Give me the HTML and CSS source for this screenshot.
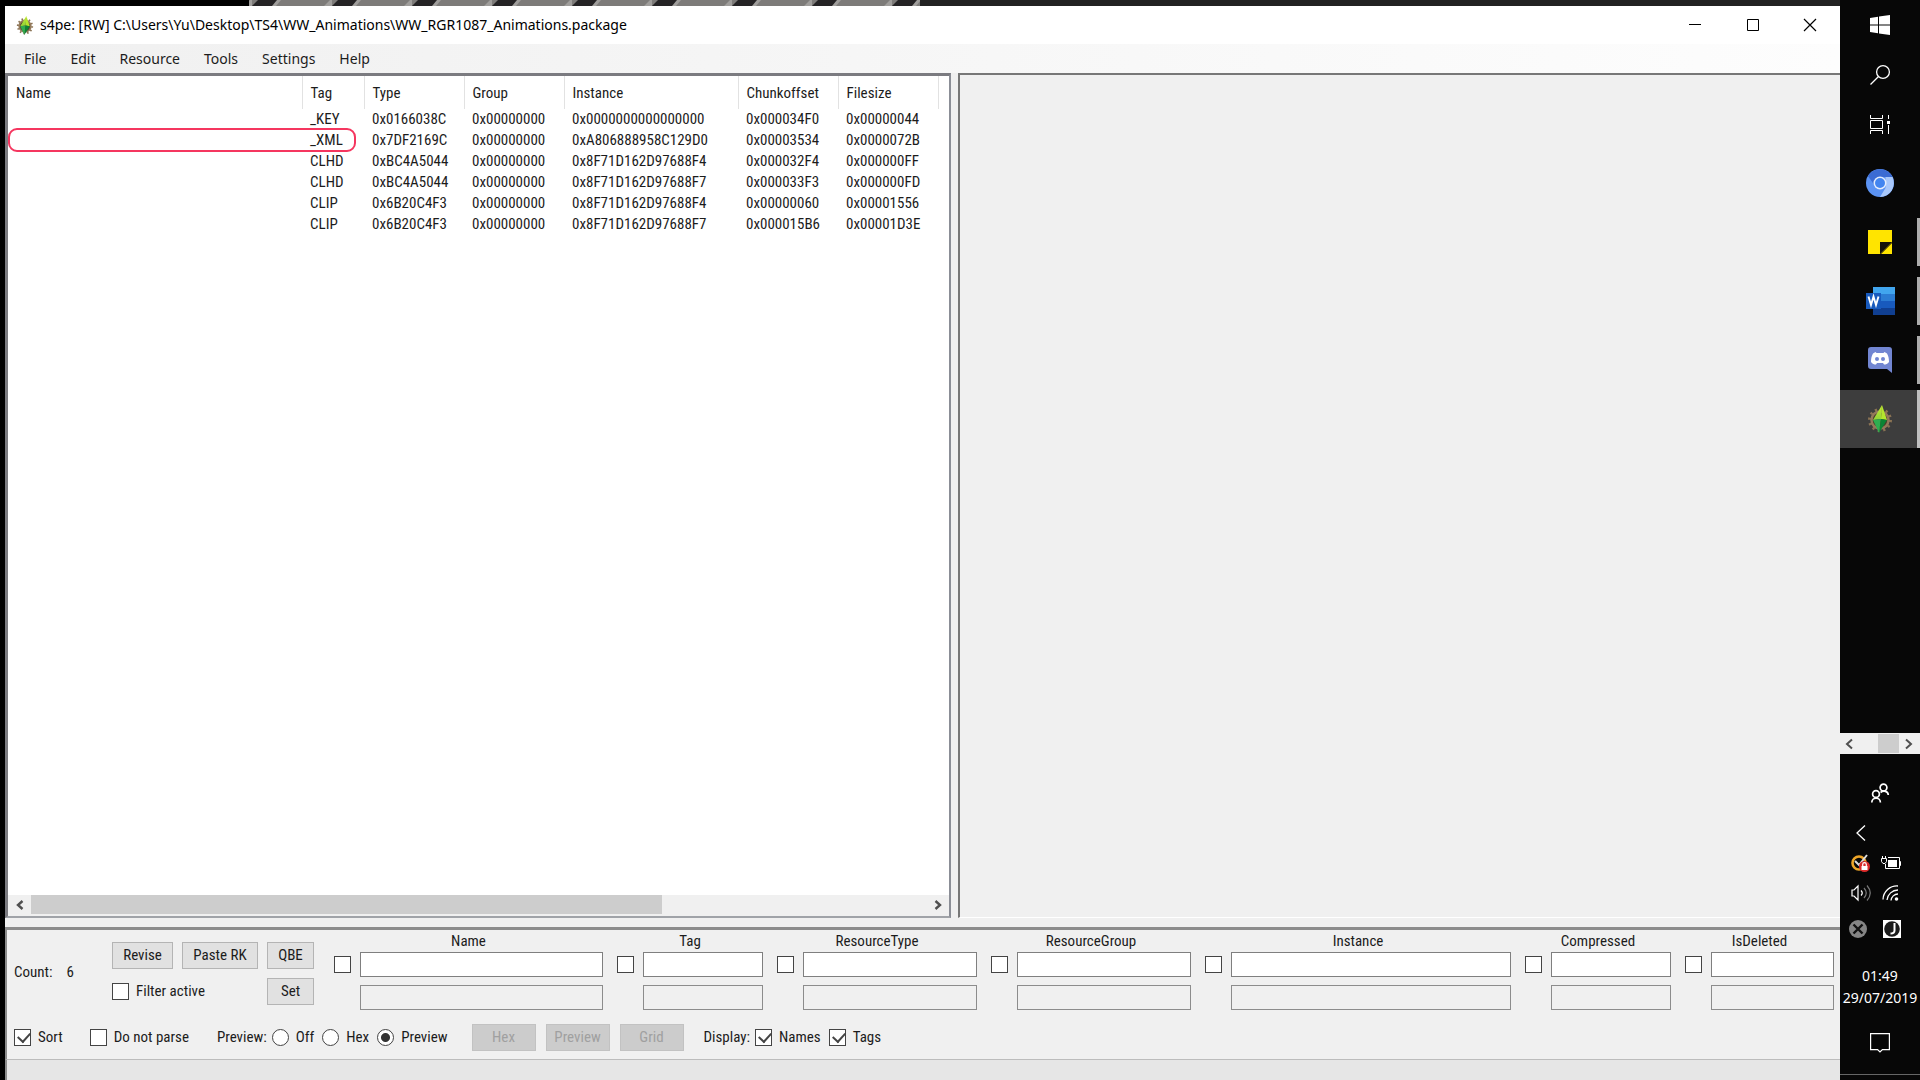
FILE: index.html
```
<!DOCTYPE html>
<html lang="en">
<head>
<meta charset="utf-8">
<title>s4pe</title>
<link rel="stylesheet" href="styles.css">
</head>
<body>
<svg class="defs" width="0" height="0" aria-hidden="true">
  <defs>
    <linearGradient id="gemLeft" x1="0" y1="0" x2="0" y2="1"><stop offset="0" stop-color="#c8ec30"/><stop offset="1" stop-color="#8fd23a"/></linearGradient>
    <symbol id="plumbob" viewBox="0 0 26 28">
      <circle cx="13" cy="15" r="10.500" fill="none" stroke="#8a7354" stroke-width="3" stroke-dasharray="2.200 3.300"/>
      <circle cx="13" cy="15" r="8.500" fill="#4a3c2a" stroke="#94795a" stroke-width="2.500"/>
      <path d="M15 0 6 15l8-1z" fill="url(#gemLeft)"/>
      <path d="M15 0 14 14l6 1z" fill="#b4e62e"/>
      <path d="M6 15l8-1-2 14z" fill="#2fae50"/>
      <path d="M14 14l6 1-8 13z" fill="#0c8434"/>
    </symbol>
  </defs>
</svg>

<div class="desktop">
  <svg class="wallpaper" height="6" aria-hidden="true">
    <defs>
      <pattern id="stripes" x="252" width="80" height="6" patternUnits="userSpaceOnUse">
        <path fill="#7d7b79" d="M0 0h80v6H0z"/>
        <path fill="#a09e9c" d="M24 0h5l-5 6h-5zM78 0h2v6h-8z"/>
        <path fill="#252325" d="M6 0h19l-5 6H0z"/>
      </pattern>
    </defs>
    <rect width="100%" height="6" fill="#222"/>
    <rect width="249" height="6"/>
    <rect x="249" width="671" height="6" fill="url(#stripes)"/>
  </svg>

  <main class="window">
    <header class="titlebar">
      <svg class="app-icon" width="18" height="19"><use href="#plumbob"/></svg>
      <h1>s4pe: [RW] C:\Users\Yu\Desktop\TS4\WW_Animations\WW_RGR1087_Animations.package</h1>
      <div class="controls">
        <button aria-label="Minimize"><svg width="12" height="12"><path d="M0 5.500h12" stroke="#000"/></svg></button>
        <button aria-label="Maximize"><svg width="12" height="12"><path d="M.5.5h11v11H.5z" fill="none" stroke="#000"/></svg></button>
        <button aria-label="Close"><svg width="12" height="12"><path d="M0 0l12 12M12 0 0 12" stroke="#000" stroke-width="1.200"/></svg></button>
      </div>
    </header>

    <nav class="menubar">
      <button>File</button><button>Edit</button><button>Resource</button><button>Tools</button><button>Settings</button><button>Help</button>
    </nav>

    <div class="split">
      <section class="list">
        <div class="table-area">
          <table>
            <colgroup><col class="c-name"><col class="c-tag"><col class="c-std"><col class="c-std"><col class="c-inst"><col class="c-std"><col class="c-std"></colgroup>
            <thead><tr><th>Name</th><th>Tag</th><th>Type</th><th>Group</th><th>Instance</th><th>Chunkoffset</th><th>Filesize</th></tr></thead>
            <tbody>
              <tr><td></td><td>_KEY</td><td>0x0166038C</td><td>0x00000000</td><td>0x0000000000000000</td><td>0x000034F0</td><td>0x00000044</td></tr>
              <tr><td></td><td>_XML</td><td>0x7DF2169C</td><td>0x00000000</td><td>0xA806888958C129D0</td><td>0x00003534</td><td>0x0000072B</td></tr>
              <tr><td></td><td>CLHD</td><td>0xBC4A5044</td><td>0x00000000</td><td>0x8F71D162D97688F4</td><td>0x000032F4</td><td>0x000000FF</td></tr>
              <tr><td></td><td>CLHD</td><td>0xBC4A5044</td><td>0x00000000</td><td>0x8F71D162D97688F7</td><td>0x000033F3</td><td>0x000000FD</td></tr>
              <tr><td></td><td>CLIP</td><td>0x6B20C4F3</td><td>0x00000000</td><td>0x8F71D162D97688F4</td><td>0x00000060</td><td>0x00001556</td></tr>
              <tr><td></td><td>CLIP</td><td>0x6B20C4F3</td><td>0x00000000</td><td>0x8F71D162D97688F7</td><td>0x000015B6</td><td>0x00001D3E</td></tr>
            </tbody>
          </table>
          <div class="marker"></div>
        </div>
        <div class="scrollbar">
          <button aria-label="Scroll left"><svg width="8" height="10"><path d="M6.500 1 2 5l4.500 4" fill="none" stroke="#505050" stroke-width="2.400"/></svg></button>
          <div class="track"><div class="thumb"></div></div>
          <button aria-label="Scroll right"><svg width="8" height="10"><path d="M1.500 1 6 5 1.500 9" fill="none" stroke="#505050" stroke-width="2.400"/></svg></button>
        </div>
      </section>
      <section class="preview"></section>
    </div>

    <section class="panel">
      <div class="filters">
        <div class="count"><span>Count:</span><span>6</span></div>
        <div class="actions">
          <div class="action-row"><button class="btn">Revise</button><button class="btn wide">Paste RK</button><button class="btn small">QBE</button></div>
          <div class="action-row"><label class="check"><input type="checkbox">Filter active</label><button class="btn small">Set</button></div>
        </div>
        <div class="fields">
          <div class="field"><label for="f1">Name</label><input type="checkbox" aria-label="Use Name"><input type="text" id="f1"><input type="text" aria-label="Name value" readonly></div>
          <div class="field"><label for="f2">Tag</label><input type="checkbox" aria-label="Use Tag"><input type="text" id="f2"><input type="text" aria-label="Tag value" readonly></div>
          <div class="field"><label for="f3">ResourceType</label><input type="checkbox" aria-label="Use ResourceType"><input type="text" id="f3"><input type="text" aria-label="ResourceType value" readonly></div>
          <div class="field"><label for="f4">ResourceGroup</label><input type="checkbox" aria-label="Use ResourceGroup"><input type="text" id="f4"><input type="text" aria-label="ResourceGroup value" readonly></div>
          <div class="field"><label for="f5">Instance</label><input type="checkbox" aria-label="Use Instance"><input type="text" id="f5"><input type="text" aria-label="Instance value" readonly></div>
          <div class="field"><label for="f6">Compressed</label><input type="checkbox" aria-label="Use Compressed"><input type="text" id="f6"><input type="text" aria-label="Compressed value" readonly></div>
          <div class="field"><label for="f7">IsDeleted</label><input type="checkbox" aria-label="Use IsDeleted"><input type="text" id="f7"><input type="text" aria-label="IsDeleted value" readonly></div>
        </div>
      </div>
      <div class="options">
        <label class="check"><input type="checkbox" checked>Sort</label>
        <label class="check"><input type="checkbox">Do not parse</label>
        <div class="group">
          <span>Preview:</span>
          <label class="check"><input type="radio" name="preview">Off</label>
          <label class="check"><input type="radio" name="preview">Hex</label>
          <label class="check"><input type="radio" name="preview" checked>Preview</label>
        </div>
        <div class="views"><button class="btn" disabled>Hex</button><button class="btn" disabled>Preview</button><button class="btn" disabled>Grid</button></div>
        <div class="group">
          <span>Display:</span>
          <label class="check"><input type="checkbox" checked>Names</label>
          <label class="check"><input type="checkbox" checked>Tags</label>
        </div>
      </div>
    </section>
    <footer class="statusbar"></footer>
  </main>
</div>

<aside class="taskbar">
  <button class="sys" aria-label="Start"><svg width="20" height="20"><path fill="#fff" d="M0 3l8-1.200V9.500H0zM9 1.600 20 0v9.500H9zM0 10.500h8v7.700L0 17zM9 10.500h11V20L9 18.400z"/></svg></button>
  <button class="sys" aria-label="Search"><svg width="20" height="20" fill="none" stroke="#fff" stroke-width="1.300"><circle cx="13" cy="7" r="6.400"/><path d="M8.500 11.500.5 19.500"/></svg></button>
  <button class="sys" aria-label="Task view"><svg width="20" height="20" fill="none" stroke="#fff"><path d="M.5 0v3.500h12V0M.5 5.500h12v8H.5zM.5 19v-3.500h12V19M18.500 0v4M18.500 10v9"/><path d="M17 6h3v3h-3z" fill="#fff" stroke="none"/></svg></button>
  <button class="app" aria-label="Chromium"><svg width="28" height="28"><circle cx="14" cy="14" r="14" fill="#5b93f3"/><path d="M1.900 7A14 14 0 0 1 26.500 8H14L8 15.500z" fill="#3b6bd3"/><path d="M26.500 8A14 14 0 0 1 14 28l5.500-9V8z" fill="#a9c8fb"/><circle cx="14" cy="14" r="6.500" fill="#e4edfd"/><circle cx="14" cy="14" r="5" fill="#4285f0"/></svg></button>
  <button class="app running" aria-label="Sticky Notes"><svg width="24" height="24"><path d="M0 0h24v12L12 24H0z" fill="#ffe400"/><path d="M12 12h12L12 24z" fill="#14120a"/><path d="M24 13v11H13z" fill="#ffe400"/></svg></button>
  <button class="app running" aria-label="Word"><svg width="29" height="28"><path fill="#41a5ee" d="M7 0h22v7H7z"/><path fill="#2b7cd3" d="M7 7h22v7H7z"/><path fill="#185abd" d="M7 14h22v7H7z"/><path fill="#103f91" d="M7 21h22v7H7z"/><path fill="#185abd" d="M0 6h15v16H0z"/><path d="M2.500 9.500 5 18l2.500-8.500L10 18l2.500-8.500" fill="none" stroke="#fff" stroke-width="1.900"/></svg></button>
  <button class="app running" aria-label="Discord"><svg width="24" height="26"><path d="M3 0h18a3 3 0 0 1 3 3v23l-5-4H3a3 3 0 0 1-3-3V3a3 3 0 0 1 3-3z" fill="#7286d2"/><path d="M7.500 5 5 6.500C3.500 9 3 12 3 15c1.500 2 3 2.500 5 2.500l1-1.500h6l1 1.500c2 0 3.500-.5 5-2.500 0-3-.5-6-2-8.500L16.500 5l-1 1h-7z" fill="#fff"/><circle cx="9" cy="12" r="2" fill="#7286d2"/><circle cx="15" cy="12" r="2" fill="#7286d2"/></svg></button>
  <button class="app running active" aria-label="s4pe"><svg width="26" height="28"><use href="#plumbob"/></svg></button>

  <div class="side-scroll">
    <button aria-label="Scroll left"><svg width="8" height="10"><path d="M7 .5 2 5l5 4.500" fill="none" stroke="#505050" stroke-width="2"/></svg></button>
    <div class="side-thumb"></div>
    <button aria-label="Scroll right"><svg width="8" height="10"><path d="M1 .5 6 5 1 9.500" fill="none" stroke="#505050" stroke-width="2"/></svg></button>
  </div>

  <button class="people" aria-label="People"><svg width="18" height="20" fill="none" stroke="#fff" stroke-width="1.700"><circle cx="12.500" cy="4.500" r="3.400"/><circle cx="5" cy="11" r="3.400"/><path d="M.8 19.500a4.300 4.300 0 0 1 8.600 0M9.500 9.500c3-2.500 7.500-1.500 7.800 2.500"/></svg></button>
  <button class="more" aria-label="Show hidden icons"><svg width="10" height="16"><path d="M9 .5 1 8l8 7.500" fill="none" stroke="#fff" stroke-width="1.300"/></svg></button>
  <div class="tray">
    <svg width="20" height="18"><circle cx="8" cy="9" r="6.500" fill="none" stroke="#eda528" stroke-width="2.600"/><path d="M4 7l4 4 8-10" fill="none" stroke="#ddd" stroke-width="2"/><circle cx="13.500" cy="12.500" r="5.500" fill="#d92a2a"/><path d="M10.500 12h6v4h-6z" fill="#fff"/><path d="M11.700 12v-1.500a1.800 1.800 0 0 1 3.600 0V12" fill="none" stroke="#fff" stroke-width="1.200"/></svg>
    <svg width="20" height="18" fill="none" stroke="#fff"><path d="M7 3.500h11.500v11H4.500V10M18.500 7.500h1v4h-1M1.500 2v2M4.500 2v2M.5 4.500h5v3l-1.500 2h-2l-1.500-2z"/><path d="M7 6h9v7H7z" fill="#fff" stroke="none"/></svg>
    <svg width="20" height="18" fill="none" stroke="#fff" stroke-width="1.200"><path d="M1 6h2l4-4v14l-4-4H1z"/><path d="M10 6.500q2.500 2.500 0 5"/><path d="M13 4q4.500 5 0 10M16 1.500q6.500 7.500 0 15" stroke="#777"/></svg>
    <svg width="18" height="18" fill="none" stroke="#fff" stroke-width="1.300"><path d="M1 15.500A14 14 0 0 1 16 2M5 16A11 11 0 0 1 16 6M9 16.500a7 7 0 0 1 7-6.500"/><circle cx="14.500" cy="15" r="1.800" fill="#fff" stroke="none"/></svg>
    <svg width="20" height="18"><circle cx="7" cy="9" r="9" fill="#858585"/><path d="M2.500 4.500l9 9M11.500 4.500l-9 9" stroke="#111" stroke-width="2.400"/></svg>
    <svg width="20" height="18"><path fill="#fff" d="M2 0h18v18H2z"/><circle cx="11" cy="9" r="7.800" fill="#1b1b1b"/><path d="M13.500 3v7.500q0 3-4 3" fill="none" stroke="#fff" stroke-width="2"/></svg>
  </div>
  <div class="clock"><time>01:49</time><time>29/07/2019</time></div>
  <button class="notify" aria-label="Notifications"><svg width="20" height="20"><path d="M.6.600h18.800v16h-7l-2.400 2.400-2.400-2.400h-7z" fill="none" stroke="#fff" stroke-width="1.200"/></svg></button>
  <div class="show-desktop"></div>
</aside>
</body>
</html>
```
FILE: styles.css
```
* { box-sizing: border-box; }

body {
  margin: 0;
  min-height: 100vh;
  display: flex;
  background: #000;
  color: #1c1c1c;
  font: 15px/21px "Roboto Condensed", Roboto, "Liberation Sans", sans-serif;
}

button { font: inherit; color: inherit; border: 0; padding: 0; background: none; }
svg { display: block; flex: none; overflow: visible; }
.defs { position: absolute; }

.desktop { flex: 1; min-width: 0; display: flex; flex-direction: column; }
.wallpaper { width: 100%; }

.window { flex: 1; margin-left: 5px; display: flex; flex-direction: column; background: #f0f0f0; }

/* Title bar and menu */
.titlebar { height: 38px; padding-left: 11px; display: flex; align-items: center; background: #fff; }
.titlebar h1 { flex: 1; margin: 0 0 0 6px; font: 14px/20px "Noto Sans", "Open Sans", sans-serif; color: #000; }
.controls { display: flex; }
.controls button { width: 58px; height: 38px; display: grid; place-items: center; }
.controls button:last-child { width: 58px; padding-right: 3px; }

.menubar {
  height: 29px;
  padding: 0 7px;
  display: flex;
  background: linear-gradient(90deg, #f0f0f0, #fdfdfd);
  font: 14px/29px "Noto Sans", "Open Sans", sans-serif;
}
.menubar button { padding: 0 12px; }

/* List and preview */
.split { flex: 1; display: flex; gap: 7px; padding-bottom: 9px; }
.list {
  width: 946px;
  display: flex;
  flex-direction: column;
  background: #fff;
  border: 1px solid #8b8e96;
  border-width: 3px 2px 2px 3px;
  border-color: #7b7b80 #8b8e96 #a0a3a8 #7b7b80;
}
.table-area { flex: 1; position: relative; }
table { width: 930px; table-layout: fixed; border-collapse: collapse; }
th, td { padding: 0 0 0 8px; text-align: left; font-weight: 400; white-space: nowrap; height: 21px; }
th { height: 33px; padding-top: 1px; border-right: 1px solid #e2e2e2; }
.c-name { width: 294px; }
.c-tag { width: 62px; }
.c-std { width: 100px; }
.c-inst { width: 174px; }
.marker { position: absolute; left: 0; top: 52px; width: 348px; height: 24px; border: 2px solid #f5365f; border-radius: 9px; }

.scrollbar { height: 21px; padding-bottom: 2px; display: flex; background: #f0f0f0; }
.scrollbar button { width: 23px; display: grid; place-items: center; }
.track { flex: 1; }
.thumb { width: 70.5%; height: 19px; background: #cdcdcd; }

.preview { flex: 1; border: solid #777; border-width: 2px 0 0 2px; border-bottom: 1px solid #fff; }

/* Filter panel */
.panel { border-top: 3px solid #8c8c8c; border-left: 2px solid #8c8c8c; padding: 0 6px 0 7px; }
.filters { display: flex; height: 82px; }
.count { width: 98px; padding-top: 32px; display: flex; gap: 14px; }
.actions { width: 202px; padding-top: 12px; display: flex; flex-direction: column; gap: 9px; }
.action-row { display: flex; justify-content: space-between; align-items: center; }

.btn { width: 61px; height: 27px; border: 1px solid #b4b4b4; background: #e1e1e1; }
.btn.wide { width: 76px; }
.btn.small { width: 47px; }
.btn:disabled { width: 64px; color: #a0a0a0; background: #ccc; border-color: #c2c2c2; }

.fields {
  flex: 1;
  margin-left: 20px;
  display: grid;
  grid-template-columns: 269fr 146fr 200fr 200fr 306fr 146fr 149fr;
  gap: 14px;
}
.field {
  display: grid;
  grid-template-columns: 17px minmax(0, 1fr);
  grid-template-rows: 22px 25px 25px;
  column-gap: 9px;
  align-content: start;
  align-items: center;
}
.field label { grid-column: 1 / 3; text-align: center; }
.field input[type="text"] {
  grid-column: 2;
  width: 100%;
  height: 25px;
  padding: 0 4px;
  border: 1px solid #7f7f7f;
  background: #fff;
  font: inherit;
}
.field input[readonly] { margin-top: 16px; background: #f0f0f0; border-color: #8c8c8c; }

.check { display: flex; align-items: center; gap: 7px; }
input[type="checkbox"], input[type="radio"] {
  appearance: none;
  flex: none;
  width: 17px;
  height: 17px;
  margin: 0;
  border: 1px solid #444;
  background: #fff;
}
input[type="checkbox"]:checked::before {
  content: "";
  display: block;
  width: 6px;
  height: 10px;
  margin: 0 0 0 5px;
  border: solid #444;
  border-width: 0 2px 2px 0;
  transform: rotate(42deg);
}
input[type="radio"] { border-radius: 50%; }
input[type="radio"]:checked { background: radial-gradient(circle, #333 4px, #fff 5px); }

.options { height: 47px; display: flex; align-items: center; padding-top: 4px; }
.options > .check:first-child { margin-right: 27px; }
.group { display: flex; gap: 8px; margin-left: 28px; }
.group span { margin-right: -3px; }
.views { display: flex; gap: 10px; margin-left: 24px; }
.views + .group { margin-left: 20px; }

.statusbar { height: 21px; background: #e6e6e6; border-top: 1px solid #bcbcbc; border-left: 2px solid #8c8c8c; }

/* Taskbar */
.taskbar { width: 80px; display: flex; flex-direction: column; background: #070707; color: #fff; }
.sys { height: 50px; display: grid; place-items: center; }
.app { height: 58px; margin-bottom: 1px; display: grid; place-items: center; }
.sys + .app { margin-top: 4px; }
.running { background: linear-gradient(#adadad, #adadad) right 50% / 3px 48px no-repeat; }
.active { background: linear-gradient(#c0c0c0, #c0c0c0) right / 3px 100% no-repeat, #3d3d3d; }

.side-scroll { height: 21px; margin-top: auto; padding: 0 7px 0 5px; display: flex; align-items: center; background: #f0f0f0; }
.side-thumb { width: 21px; height: 19px; margin: 0 6px 0 auto; background: #cdcdcd; }
.people { height: 71px; padding-top: 6px; display: grid; place-items: center; }
.more { height: 16px; padding-left: 16px; margin-bottom: 13px; }
.tray { display: grid; grid-template-columns: 20px 20px; column-gap: 10px; row-gap: 12px; padding-left: 11px; }
.tray svg:nth-child(even) { justify-self: center; }
.tray svg:nth-child(n+5) { margin-top: 6px; }
.clock { margin-top: 27px; display: flex; flex-direction: column; align-items: center; font: 14px/22px "Noto Sans", "Open Sans", sans-serif; }
.notify { height: 65px; padding-top: 3px; display: grid; place-items: center; }
.show-desktop { height: 6px; border-top: 1px solid #666; }
```
